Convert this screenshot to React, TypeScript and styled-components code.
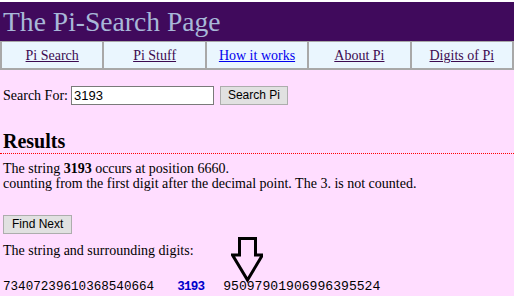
import React from "react";
import styled, { createGlobalStyle } from "styled-components";

const Global = createGlobalStyle`
  html, body { margin: 0; padding: 0; background: #ffffff; }
  body { font-family: "Liberation Serif", "Times New Roman", serif; }
`;

const Page = styled.div`
  margin-top: 2px;
  width: 514px;
  height: 294px;
  background: #ffddff;
  overflow: hidden;
`;

const Banner = styled.div`
  height: 39px;
  background: #400a5c;
  color: #a8b8d8;
  font-size: 27.6px;
  line-height: 39px;
  padding-left: 3px;
  white-space: nowrap;
`;

const Nav = styled.nav`
  display: grid;
  grid-template-columns: repeat(5, 1fr);
  column-gap: 2px;
  background: #a8a8a8;
  border: 2px solid #a8a8a8;
  border-top-width: 1px;
  height: 26px;
`;

const NavCell = styled.div`
  background: #eaf6fe;
  display: flex;
  align-items: center;
  justify-content: center;
  padding-top: 2px;
  font-size: 14px;
`;

const NavLink = styled.a<{ $visited?: boolean }>`
  color: ${(p) => (p.$visited ? "#3c0a50" : "#0000ee")};
  text-decoration: underline;
  cursor: pointer;
`;

const Content = styled.div`
  padding: 0 3px;
  font-size: 14px;
  color: #000;
`;

const SearchRow = styled.form`
  display: flex;
  align-items: center;
  margin-top: 15px;
  height: 21px;
`;

const Label = styled.span`
  margin-right: 3px;
`;

const Input = styled.input`
  width: 137px;
  height: 15px;
  border: 1px solid #7a7a7a;
  outline: none;
  padding: 1px 2px;
  font-family: "Liberation Sans", Arial, sans-serif;
  font-size: 13px;
  background: #fff;
  color: #000;
`;

const Button = styled.button<{ $pad?: number }>`
  font-family: "Liberation Sans", Arial, sans-serif;
  font-size: 12px;
  color: #000;
  background: #e1e1e1;
  border: 1px solid #adadad;
  height: 19px;
  padding: 0 ${(p) => p.$pad ?? 8}px;
  line-height: 17px;
`;

const SearchButton = styled(Button)`
  margin-left: 6px;
`;

const Heading = styled.h2`
  margin: 24px -3px 0;
  font-size: 20px;
  font-weight: bold;
  line-height: 23px;
  padding: 0 0 0 3px;
  border-bottom: 1px dotted #ff0000;
`;

const Para = styled.p`
  margin: 7px 0 0;
  line-height: 15px;
`;

const FindRow = styled.div`
  margin-top: 24px;
  height: 19px;
  display: flex;
`;

const Surround = styled.div`
  position: relative;
  margin-top: 9px;
`;

const SurroundLabel = styled.div`
  line-height: 15px;
`;

const Digits = styled.div`
  margin-top: 21px;
  font-family: "Liberation Mono", "Courier New", monospace;
  line-height: 15px;
  color: #000;
  white-space: pre;
  display: flex;
  align-items: baseline;
`;

const Block = styled.span<{ $size: number; $gap?: number }>`
  font-size: ${(p) => p.$size}px;
  margin-left: ${(p) => p.$gap ?? 0}px;
`;

const Hit = styled.b`
  color: #0000cc;
  font-size: 12.6px;
  letter-spacing: -0.8px;
  margin-left: 23px;
`;

const Arrow = styled.svg`
  position: absolute;
  left: 228px;
  top: -6px;
`;

export default function App() {
  return (
    <>
      <Global />
      <Page>
        <Banner>The Pi-Search Page</Banner>
        <Nav>
          <NavCell><NavLink $visited>Pi Search</NavLink></NavCell>
          <NavCell><NavLink $visited>Pi Stuff</NavLink></NavCell>
          <NavCell><NavLink>How it works</NavLink></NavCell>
          <NavCell><NavLink $visited>About Pi</NavLink></NavCell>
          <NavCell><NavLink $visited>Digits of Pi</NavLink></NavCell>
        </Nav>
        <Content>
          <SearchRow onSubmit={(e) => e.preventDefault()}>
            <Label>Search For:</Label>
            <Input defaultValue="3193" />
            <SearchButton type="button" $pad={7}>Search Pi</SearchButton>
          </SearchRow>
          <Heading>Results</Heading>
          <Para>
            The string <b>3193</b> occurs at position 6660.
            <br />
            counting from the first digit after the decimal point. The 3. is not counted.
          </Para>
          <FindRow>
            <Button type="button">Find Next</Button>
          </FindRow>
          <Surround>
            <SurroundLabel>The string and surrounding digits:</SurroundLabel>
            <Digits>
              <Block $size={12.6}>73407239610368540664</Block>
              <Hit>3193</Hit>
              <Block $size={13.1} $gap={19}>95097901906996395524</Block>
            </Digits>
            <Arrow width="32" height="48" viewBox="0 0 32 48">
              <path
                d="M6.5 1.5 H22.5 V18 H29.5 L14.5 43 L-0.5 18 H6.5 Z"
                fill="none"
                stroke="#000"
                strokeWidth="3"
                strokeLinejoin="miter"
                strokeMiterlimit="10"
                transform="translate(2 0)"
              />
            </Arrow>
          </Surround>
        </Content>
      </Page>
    </>
  );
}
